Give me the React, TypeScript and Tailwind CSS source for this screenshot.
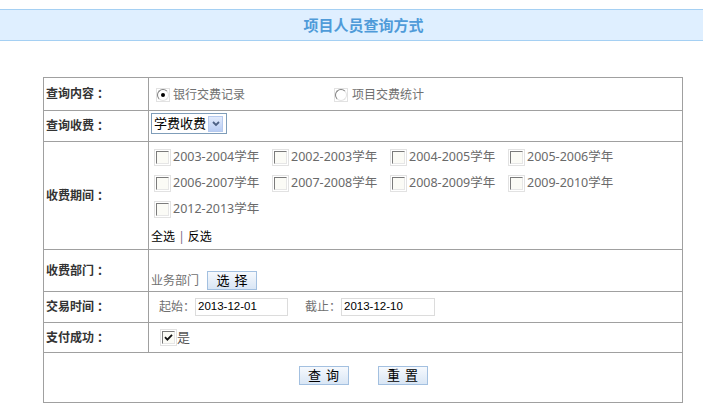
import React from 'react';

const years = [
  '2003-2004学年',
  '2002-2003学年',
  '2004-2005学年',
  '2005-2006学年',
  '2006-2007学年',
  '2007-2008学年',
  '2008-2009学年',
  '2009-2010学年',
  '2012-2013学年',
];

function CheckBox({ checked = false }: { checked?: boolean }) {
  return (
    <span className="flex h-[17px] w-[17px] shrink-0 items-center justify-center border border-[#e2e2e2] bg-white">
      <span className="flex h-[13px] w-[13px] items-center justify-center border-l border-t border-r border-b border-l-[#7b7b7b] border-t-[#7b7b7b] border-r-[#e6e6e6] border-b-[#e6e6e6] bg-[#fbfbf6]">
        {checked && (
          <svg width="9" height="9" viewBox="0 0 9 9">
            <path d="M1 4.2 L3.4 6.6 L8 1.8" fill="none" stroke="#111" strokeWidth="1.8" />
          </svg>
        )}
      </span>
    </span>
  );
}

function Radio({ checked = false }: { checked?: boolean }) {
  return (
    <span className="flex h-[14px] w-[14px] shrink-0 items-center justify-center border border-[#e2e2e2] bg-white">
      <span className="flex h-[12px] w-[12px] items-center justify-center rounded-full border border-l-[#808080] border-t-[#808080] border-r-[#e4e4e4] border-b-[#e4e4e4] bg-white">
        {checked && <span className="h-[4px] w-[4px] rounded-full bg-black" />}
      </span>
    </span>
  );
}

function BlueButton({ label, className = '' }: { label: string; className?: string }) {
  return (
    <button
      className={`flex h-[19px] w-[50px] items-center justify-center border border-[#a3c0e0] bg-gradient-to-b from-[#f6f9fd] to-[#d9e6f5] pl-[5px] text-[13px] leading-none tracking-[5px] text-black ${className}`}
    >
      {label}
    </button>
  );
}

function Row({
  label,
  className = '',
  last = false,
  children,
}: {
  label: string;
  className?: string;
  last?: boolean;
  children: React.ReactNode;
}) {
  return (
    <div className={`flex ${last ? '' : 'border-b border-[#a0a0a0]'} ${className}`}>
      <div className="flex w-[105px] shrink-0 items-center border-r border-[#a0a0a0] pl-[2px] text-[12px] font-bold text-[#333]">
        {label}
        <span className="ml-[3px]">：</span>
      </div>
      <div className="flex flex-1">{children}</div>
    </div>
  );
}

export default function App() {
  return (
    <main
      className="min-h-screen bg-white pb-[8px]"
      style={{ fontFamily: '"Noto Sans", "Noto Sans CJK SC", sans-serif' }}
    >
      <div className="mt-[9px] h-[32px] border-y border-[#a5d0f3] bg-[#dfefff] pl-[24px] text-center text-[15px] font-bold leading-[30px] text-[#4f9bd9]">
        项目人员查询方式
      </div>

      <div className="ml-[43px] mt-[36px] w-[640px] border border-[#a0a0a0]">
        <Row label="查询内容" className="h-[33px]">
          <div className="flex items-center pl-[7px] pt-[1px] text-[12px] text-[#707070]">
            <div className="flex w-[178px] items-center gap-[3px]">
              <Radio checked />
              <span>银行交费记录</span>
            </div>
            <div className="flex items-center gap-[4px]">
              <Radio />
              <span>项目交费统计</span>
            </div>
          </div>
        </Row>

        <Row label="查询收费" className="h-[31px]">
          <div className="pl-[2px] pt-[2px]">
            <div className="flex h-[21px] w-[76px] items-center justify-between border border-[#7f9db9] bg-white pl-[2px] pr-[3px] text-[13px] leading-none text-black">
              <span>学费收费</span>
              <span className="flex h-[16px] w-[15px] items-center justify-center border border-[#b6caee] bg-gradient-to-b from-[#e2ebfc] to-[#b9cdf4]">
                <svg width="8" height="6" viewBox="0 0 8 6">
                  <path d="M1 1 L4 4 L7 1" fill="none" stroke="#4d6185" strokeWidth="1.8" />
                </svg>
              </span>
            </div>
          </div>
        </Row>

        <Row label="收费期间" className="h-[108px]">
          <div className="flex flex-col pt-[2px]">
            <div className="flex w-[480px] flex-wrap pl-[5px]">
              {years.map((y) => (
                <div key={y} className="flex h-[26px] w-[118px] items-center gap-[2px] text-[12.5px] text-[#6a6a6a]">
                  <CheckBox />
                  <span>{y}</span>
                </div>
              ))}
            </div>
            <div className="mt-[7px] pl-[2px] text-[12px] leading-[16px] text-black">
              全选 <span className="text-[#7a6a8a]">|</span> 反选
            </div>
          </div>
        </Row>

        <Row label="收费部门" className="h-[42px]">
          <div className="flex items-end pb-[1px] pl-[2px]">
            <div className="flex items-center">
              <span className="pt-[1px] text-[12px] text-[#707070]">业务部门</span>
              <BlueButton label="选择" className="ml-[8px]" />
            </div>
          </div>
        </Row>

        <Row label="交易时间" className="h-[31px]">
          <div className="flex items-center pl-[10px] text-[12px] text-[#707070]">
            <span>起始：</span>
            <div
              className="flex h-[18px] w-[93px] items-center border border-[#dcdcdc] pl-[2px] text-[11.5px] text-black"
              style={{ fontFamily: '"Liberation Sans", sans-serif' }}
            >
              2013-12-01
            </div>
            <span className="ml-[17px]">截止：</span>
            <div
              className="flex h-[18px] w-[94px] items-center border border-[#dcdcdc] pl-[2px] text-[11.5px] text-black"
              style={{ fontFamily: '"Liberation Sans", sans-serif' }}
            >
              2013-12-10
            </div>
          </div>
        </Row>

        <Row label="支付成功" className="h-[30px]">
          <div className="flex items-center pl-[11px] text-[13px] text-[#555]">
            <CheckBox checked />
            <span>是</span>
          </div>
        </Row>

        <div className="flex h-[49px] justify-center gap-[29px] pt-[13px]">
          <BlueButton label="查询" />
          <BlueButton label="重置" />
        </div>
      </div>
    </main>
  );
}
